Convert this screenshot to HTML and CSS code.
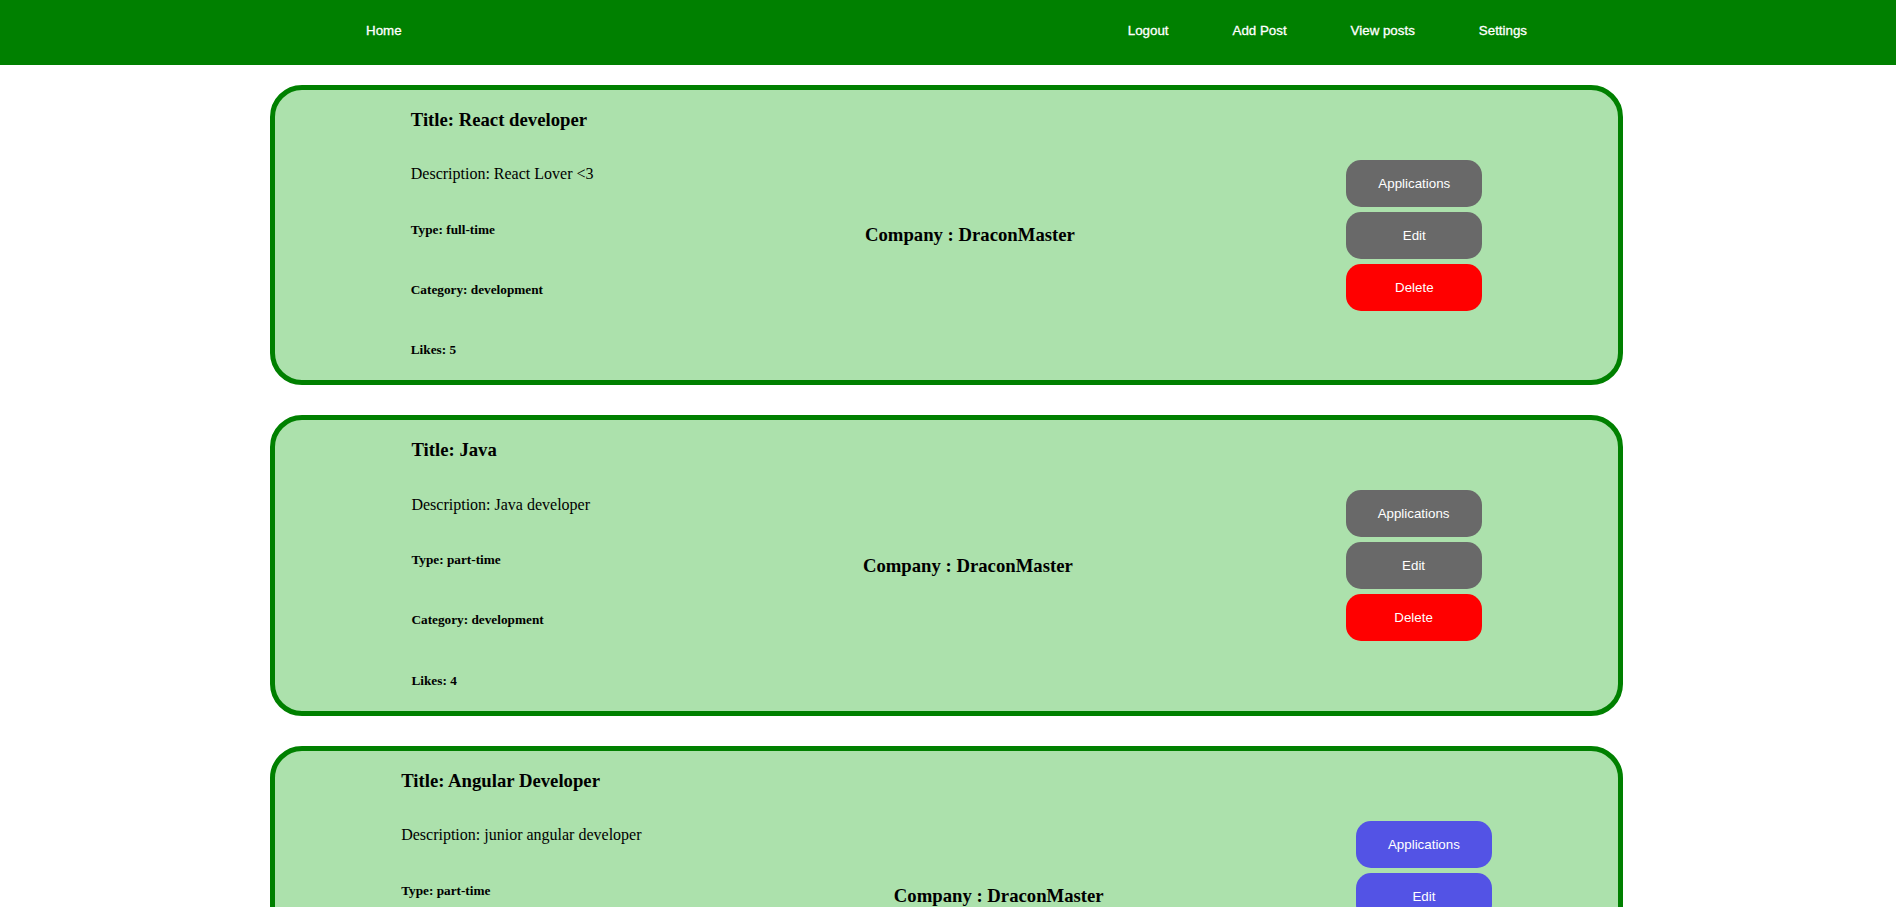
FILE: index.html
```html
<!DOCTYPE html>
<html>
<head>
<meta charset="utf-8">
<link rel="stylesheet" href="styles.css">
</head>
<body>
<nav class="navbar">
  <div class="nav-left"><a class="nav-link" href="#">Home</a></div>
  <div class="nav-right">
    <a class="nav-link" href="#">Logout</a>
    <a class="nav-link" href="#">Add Post</a>
    <a class="nav-link" href="#">View posts</a>
    <a class="nav-link" href="#">Settings</a>
  </div>
</nav>
<main class="posts">
  <section class="card">
    <div class="info">
      <h3>Title: React developer</h3>
      <p>Description: React Lover &lt;3</p>
      <h5>Type: full-time</h5>
      <h5>Category: development</h5>
      <h5>Likes: 5</h5>
    </div>
    <h3 class="company">Company : DraconMaster</h3>
    <div class="actions">
      <button class="btn btn-gray">Applications</button>
      <button class="btn btn-gray">Edit</button>
      <button class="btn btn-red">Delete</button>
    </div>
  </section>
  <section class="card">
    <div class="info">
      <h3>Title: Java</h3>
      <p>Description: Java developer</p>
      <h5>Type: part-time</h5>
      <h5>Category: development</h5>
      <h5>Likes: 4</h5>
    </div>
    <h3 class="company">Company : DraconMaster</h3>
    <div class="actions">
      <button class="btn btn-gray">Applications</button>
      <button class="btn btn-gray">Edit</button>
      <button class="btn btn-red">Delete</button>
    </div>
  </section>
  <section class="card">
    <div class="info">
      <h3>Title: Angular Developer</h3>
      <p>Description: junior angular developer</p>
      <h5>Type: part-time</h5>
      <h5>Category: development</h5>
      <h5>Likes: 0</h5>
    </div>
    <h3 class="company">Company : DraconMaster</h3>
    <div class="actions">
      <button class="btn btn-blue">Applications</button>
      <button class="btn btn-blue">Edit</button>
      <button class="btn btn-blue">Delete</button>
    </div>
  </section>
</main>
</body>
</html>
```
FILE: styles.css
```css
html, body {
  margin: 0;
  padding: 0;
  background: #ffffff;
  font-family: "Liberation Serif", "Times New Roman", serif;
  color: #000000;
}

.navbar {
  box-sizing: border-box;
  height: 65px;
  background: #008000;
  display: flex;
  align-items: center;
  justify-content: space-between;
  padding: 0 369px 5px 366px;
}

.nav-right {
  display: flex;
  gap: 64px;
}

.nav-link {
  font-family: "Liberation Sans", Arial, sans-serif;
  font-size: 13.33px;
  font-weight: normal;
  color: #ffffff;
  text-decoration: none;
  -webkit-text-stroke: 0.3px #ffffff;
}

.posts {
  display: flex;
  flex-direction: column;
  align-items: center;
  gap: 30px;
  padding-top: 20px;
}

.card {
  width: 1343px;
  border: 5px solid #008000;
  border-radius: 32px;
  background: #ace1ac;
  display: flex;
  justify-content: space-around;
  align-items: center;
  margin-left: -3px;
}

.info {
  display: flex;
  flex-direction: column;
}

.info h3 {
  font-size: 18.72px;
  margin: 18.72px 0;
}

.info p {
  font-size: 16px;
  margin: 16px 0;
}

.info h5 {
  font-size: 13.28px;
  margin: 22.18px 0;
}

.company {
  font-size: 18.72px;
  margin: 0;
}

.actions {
  display: flex;
  flex-direction: column;
  gap: 5px;
}

.btn {
  height: 47px;
  padding: 0 32px;
  border: none;
  border-radius: 15px;
  color: #ffffff;
  font-family: "Liberation Sans", Arial, sans-serif;
  font-size: 13.33px;
}

.btn-gray {
  background: #696969;
}

.btn-red {
  background: #ff0000;
}

.btn-blue {
  background: #5353e5;
}
```
